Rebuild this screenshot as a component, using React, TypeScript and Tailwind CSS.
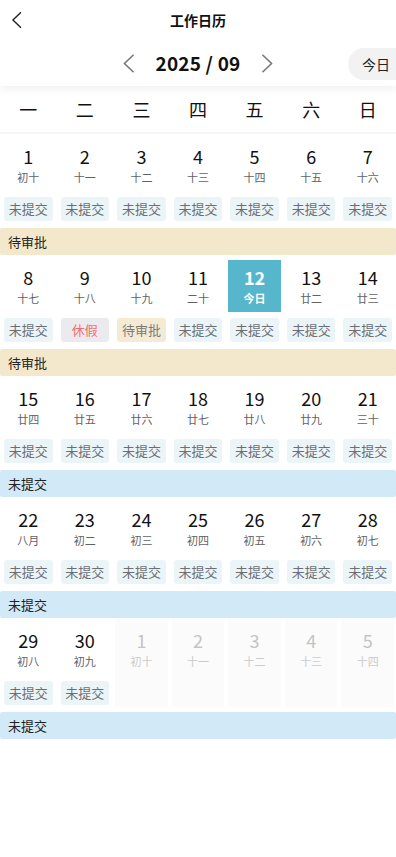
type Day = {
  day: number;
  lunar: string;
  status?: "未提交" | "休假" | "待审批";
  today?: boolean;
  outside?: boolean;
};

const LUNAR = [
  "初十", "十一", "十二", "十三", "十四", "十五", "十六",
  "十七", "十八", "十九", "二十", "廿一", "廿二", "廿三",
  "廿四", "廿五", "廿六", "廿七", "廿八", "廿九", "三十",
  "八月", "初二", "初三", "初四", "初五", "初六", "初七",
  "初八", "初九",
];

const NEXT_LUNAR = ["初十", "十一", "十二", "十三", "十四"];

const WEEK_STATUS: ("待审批" | "未提交")[] = ["待审批", "待审批", "未提交", "未提交", "未提交"];

const STATUS_STYLE: Record<string, string> = {
  未提交: "bg-[#ebf5f8] text-[#6b6f75]",
  休假: "bg-[#ebebef] text-[#f26d6d]",
  待审批: "bg-[#f5ebd5] text-[#7a7a7a]",
};

const BANNER_STYLE: Record<string, string> = {
  待审批: "bg-[#f3e8cc]",
  未提交: "bg-[#d2e9f8]",
};

function buildWeeks(): Day[][] {
  const days: Day[] = LUNAR.map((lunar, i) => {
    const day = i + 1;
    let status: Day["status"] = "未提交";
    if (day === 9) status = "休假";
    if (day === 10) status = "待审批";
    return { day, lunar, status, today: day === 12 };
  });
  NEXT_LUNAR.forEach((lunar, i) => days.push({ day: i + 1, lunar, outside: true }));
  const weeks: Day[][] = [];
  for (let i = 0; i < days.length; i += 7) weeks.push(days.slice(i, i + 7));
  return weeks;
}

// thin chevron, drawn to the reference's proportions
function Chevron({ dir, className }: { dir: "left" | "right"; className?: string }) {
  return (
    <svg viewBox="0 0 12 20" className={className} fill="none" stroke="currentColor" strokeWidth={1.8} strokeLinecap="round" strokeLinejoin="round">
      {dir === "left" ? <path d="M11 1 1.5 10 11 19" /> : <path d="M1 1l9.5 9L1 19" />}
    </svg>
  );
}

function DayCell({ d }: { d: Day }) {
  return (
    <div className="px-[2px]">
      <div className={`flex flex-col pt-[5px] pb-[2px] ${d.outside ? "bg-[#fbfbfb]" : ""}`}>
        <div
          className={`flex h-[52px] flex-col items-center pt-[5px] ${
            d.today ? "bg-[#56b7cc] text-white" : ""
          }`}
        >
          <span
            className={`text-[18px] leading-[24px] ${
              d.today ? "font-bold" : d.outside ? "text-[#c4c4c4]" : "text-[#111]"
            }`}
          >
            {d.day}
          </span>
          <span
            className={`mt-[1px] text-[11px] leading-[16px] ${
              d.today ? "font-bold" : d.outside ? "text-[#cbcbcb]" : "text-[#606266]"
            }`}
          >
            {d.today ? "今日" : d.lunar}
          </span>
        </div>
        <div className="mx-[2px] mt-[6px] h-[24px]">
          {d.status && (
            <div
              className={`flex h-[24px] items-center justify-center rounded-[3px] text-[13px] ${STATUS_STYLE[d.status]}`}
            >
              {d.status}
            </div>
          )}
        </div>
      </div>
    </div>
  );
}

export default function App() {
  const weeks = buildWeeks();

  return (
    <div
      className="min-h-[857px] w-full overflow-hidden bg-white text-[#111]"
      style={{ fontFamily: '"Noto Sans CJK SC", "Noto Sans", sans-serif' }}
    >
      <div className="relative z-10 bg-white shadow-[0_4px_8px_rgba(0,0,0,0.05)]">
        {/* top bar */}
        <div className="relative flex h-[40px] items-center justify-center">
          <Chevron dir="left" className="absolute left-[11px] top-[12px] h-[16px] w-[11px] text-[#222]" />
          <span className="text-[14px] font-bold">工作日历</span>
        </div>
        {/* month switcher */}
        <div className="relative flex h-[46px] items-center justify-center">
          <Chevron dir="left" className="h-[19px] w-[11px] text-[#777]" />
          <span className="mx-[21px] text-[19px] font-bold tracking-[0.2px]">2025 / 09</span>
          <Chevron dir="right" className="h-[19px] w-[11px] text-[#777]" />
          <div className="absolute right-[-14px] top-[8px] flex h-[32px] items-center rounded-full bg-[#f2f2f2] pl-[14px] pr-[20px] text-[14px] text-[#222]">
            今日
          </div>
        </div>
      </div>

      {/* weekdays */}
      <div className="grid h-[48px] grid-cols-7 items-center border-b-2 border-[#f6f6f6]">
        {["一", "二", "三", "四", "五", "六", "日"].map((w) => (
          <span key={w} className="text-center text-[18px] text-[#111]">
            {w}
          </span>
        ))}
      </div>

      {weeks.map((week, wi) => (
        <div key={wi}>
          <div className="grid grid-cols-7">
            {week.map((d, di) => (
              <DayCell key={di} d={d} />
            ))}
          </div>
          <div
            className={`mt-[5px] flex h-[27px] items-center rounded-[2px] pl-[8px] text-[13px] text-[#222] ${BANNER_STYLE[WEEK_STATUS[wi]]}`}
          >
            {WEEK_STATUS[wi]}
          </div>
        </div>
      ))}
    </div>
  );
}
